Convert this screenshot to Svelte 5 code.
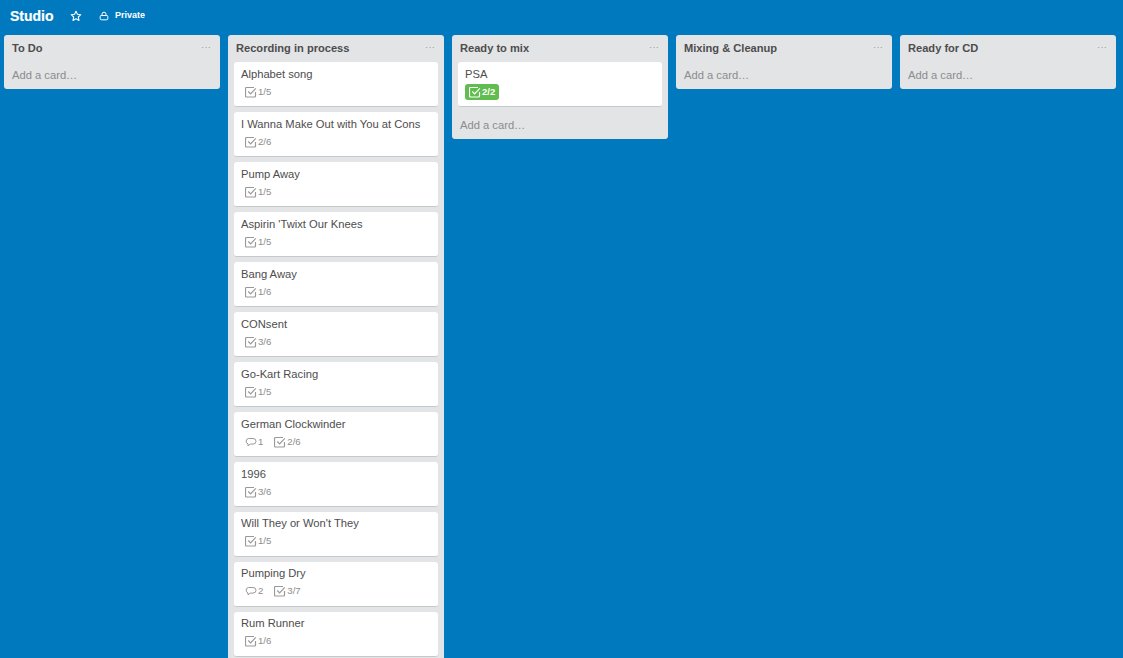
<script>
  const lists = [
    { title: 'To Do', cards: [] },
    {
      title: 'Recording in process',
      hideAdd: true,
      cards: [
        { name: 'Alphabet song', check: '1/5' },
        { name: 'I Wanna Make Out with You at Cons', check: '2/6' },
        { name: 'Pump Away', check: '1/5' },
        { name: "Aspirin 'Twixt Our Knees", check: '1/5' },
        { name: 'Bang Away', check: '1/6' },
        { name: 'CONsent', check: '3/6' },
        { name: 'Go-Kart Racing', check: '1/5' },
        { name: 'German Clockwinder', comments: 1, check: '2/6' },
        { name: '1996', check: '3/6' },
        { name: "Will They or Won't They", check: '1/5' },
        { name: 'Pumping Dry', comments: 2, check: '3/7' },
        { name: 'Rum Runner', check: '1/6' }
      ]
    },
    { title: 'Ready to mix', cards: [{ name: 'PSA', check: '2/2', done: true }] },
    { title: 'Mixing & Cleanup', cards: [] },
    { title: 'Ready for CD', cards: [] }
  ];
</script>

<div class="board">
  <header class="bar">
    <span class="name">Studio</span>
    <svg class="star" viewBox="0 0 12 12" width="12" height="12" aria-hidden="true">
      <path d="M6 1.200l1.400 3.100 3.400.4-2.500 2.300.7 3.400L6 8.700l-3 1.700.7-3.400L1.200 4.700l3.400-.4z" fill="none" stroke="#fff" stroke-width="1.100" stroke-linejoin="round" />
    </svg>
    <svg class="lock" viewBox="0 0 10 10" width="10" height="10" aria-hidden="true">
      <path d="M3 4.500V3.200a2 2 0 0 1 4 0v1.300" fill="none" stroke="#fff" stroke-width="1" />
      <rect x="1.200" y="4.500" width="7.600" height="4.300" rx="1" fill="none" stroke="#fff" stroke-width="1" />
    </svg>
    <span class="private">Private</span>
  </header>

  <main class="lists">
    {#each lists as list}
      <section class="list" class:noadd={list.hideAdd}>
        <div class="head">
          <h2>{list.title}</h2>
          <span class="dots">···</span>
        </div>
        {#if list.cards.length}
          <div class="cards">
            {#each list.cards as card}
              <article class="card">
                <div class="title">{card.name}</div>
                <div class="badges">
                  {#if card.comments}
                    <span class="badge comment">
                      <svg viewBox="0 0 12 12" width="12" height="12" aria-hidden="true">
                        <path d="M3.500 2.500h4.500a3 2.800 0 0 1 0 5.600H5.200L3 9.900V7.900A2.800 2.800 0 0 1 3.500 2.500z" fill="none" stroke="#999" stroke-width="1" stroke-linejoin="round" />
                      </svg>
                      {card.comments}
                    </span>
                  {/if}
                  <span class="badge" class:done={card.done}>
                    <svg viewBox="0 0 12 12" width="12" height="12" aria-hidden="true">
                      <path d="M10.500 6v4a1 1 0 0 1-1 1H1.500a1 1 0 0 1-1-1V2.500a1 1 0 0 1 1-1h7.500" fill="none" stroke={card.done ? '#fff' : '#999'} stroke-width="1.200" />
                      <path d="M3.300 5.500l2.300 2.300L10.800 2.300" fill="none" stroke={card.done ? '#fff' : '#999'} stroke-width="1.200" />
                    </svg>
                    {card.check}
                  </span>
                </div>
              </article>
            {/each}
          </div>
        {/if}
        {#if !list.hideAdd}
          <div class="add">Add a card…</div>
        {/if}
      </section>
    {/each}
  </main>
</div>

<style>
  :global(body) {
    margin: 0;
    background: #0079bf;
    overflow: hidden;
  }
  .board {
    height: 658px;
    overflow: hidden;
    background: #0079bf;
    font-family: "Liberation Sans", Arial, sans-serif;
    color: #4d4d4d;
  }
  .bar {
    display: flex;
    align-items: center;
    height: 35px;
    padding: 0 0 3px 10px;
    box-sizing: border-box;
    color: #fff;
  }
  .name {
    font-size: 14px;
    font-weight: 700;
    width: 60px;
    -webkit-text-stroke: 0.2px #fff;
  }
  .star {
    margin-right: 17px;
  }
  .lock {
    margin-right: 6px;
    margin-top: -1px;
  }
  .private {
    font-size: 9px;
    font-weight: 700;
    margin-top: -2px;
  }
  .lists {
    display: flex;
    align-items: flex-start;
    gap: 8px;
    padding-left: 4px;
  }
  .list {
    width: 216px;
    flex: none;
    background: #e2e4e6;
    border-radius: 3px;
    box-sizing: border-box;
    padding: 0 6px;
  }
  .list.noadd {
    padding-bottom: 6px;
  }
  .head {
    display: flex;
    justify-content: space-between;
    align-items: center;
    height: 27px;
    padding: 0 3px 0 2px;
  }
  h2 {
    margin: -2px 0 0;
    font-size: 11.100px;
    font-weight: 700;
    color: #4d4d4d;
  }
  .dots {
    font-size: 9px;
    color: #999;
    letter-spacing: 0.3px;
    margin-top: -4px;
  }
  .cards {
    display: flex;
    flex-direction: column;
    gap: 5px;
  }
  .card {
    height: 45px;
    box-sizing: border-box;
    background: #fff;
    border-radius: 3px;
    border-bottom: 1px solid #c4c9cc;
    padding: 5px 7px 0;
  }
  .card:nth-child(n + 10) .title {
    margin-top: -1px;
    margin-bottom: 1px;
  }
  .title {
    font-size: 11.200px;
    line-height: 14px;
    color: #4d4d4d;
  }
  .badges {
    display: flex;
    gap: 11px;
    margin-top: 3px;
    padding-left: 4px;
  }
  .badge {
    display: flex;
    align-items: center;
    gap: 1px;
    font-size: 9.600px;
    line-height: 16px;
    color: #8c8c8c;
  }
  .badge.done {
    background: #61bd4f;
    color: #fff;
    font-weight: 700;
    border-radius: 3px;
    margin-left: -4px;
    padding: 0 4px;
  }
  .add {
    height: 27px;
    line-height: 27px;
    padding-left: 2px;
    font-size: 11.200px;
    color: #8c8c8c;
  }
  .cards + .add {
    box-sizing: border-box;
    height: 32px;
    padding-top: 5px;
  }
</style>
